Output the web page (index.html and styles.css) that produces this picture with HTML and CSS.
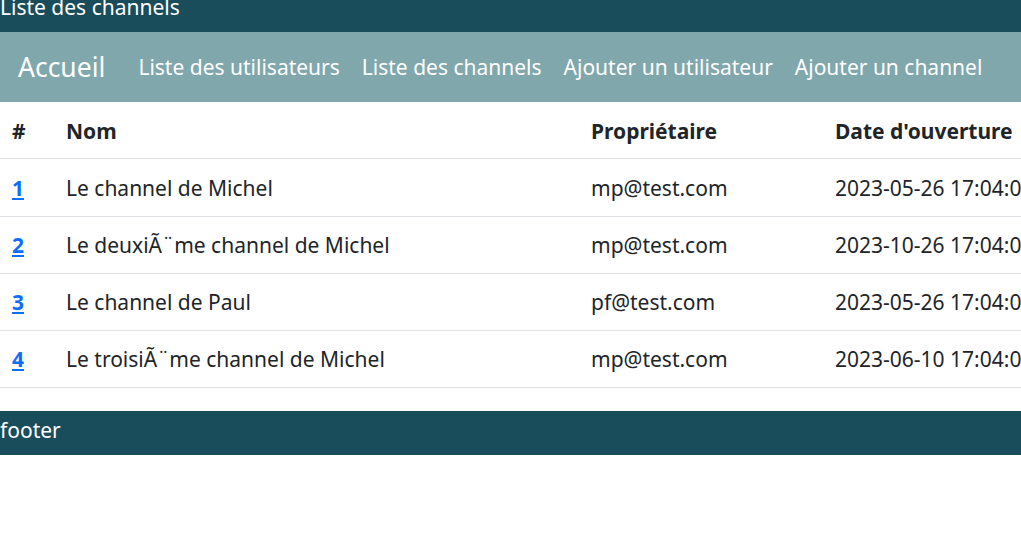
FILE: index.html
```html
<!DOCTYPE html>
<html lang="fr">
<head>
<meta charset="utf-8">
<title>Liste des channels</title>
<link rel="stylesheet" href="styles.css">
</head>
<body>
<header class="top">
  <h1 class="title">Liste des channels</h1>
</header>
<nav class="nav">
  <a class="brand" href="#">Accueil</a>
  <a class="link" href="#">Liste des utilisateurs</a>
  <a class="link" href="#">Liste des channels</a>
  <a class="link" href="#">Ajouter un utilisateur</a>
  <a class="link" href="#">Ajouter un channel</a>
</nav>
<main class="content">
  <table class="table">
    <thead>
      <tr><th class="c-id">#</th><th class="c-name">Nom</th><th class="c-owner">Propriétaire</th><th class="c-date">Date d'ouverture</th></tr>
    </thead>
    <tbody>
      <tr><td><a class="id" href="#">1</a></td><td>Le channel de Michel</td><td>mp@test.com</td><td>2023-05-26 17:04:05</td></tr>
      <tr><td><a class="id" href="#">2</a></td><td>Le deuxiÃ¨me channel de Michel</td><td>mp@test.com</td><td>2023-10-26 17:04:05</td></tr>
      <tr><td><a class="id" href="#">3</a></td><td>Le channel de Paul</td><td>pf@test.com</td><td>2023-05-26 17:04:05</td></tr>
      <tr><td><a class="id" href="#">4</a></td><td>Le troisiÃ¨me channel de Michel</td><td>mp@test.com</td><td>2023-06-10 17:04:05</td></tr>
    </tbody>
  </table>
</main>
<footer class="footer">footer</footer>
</body>
</html>
```
FILE: styles.css
```css
html, body {
  margin: 0;
  padding: 0;
  overflow: hidden;
}
body {
  font-family: "Noto Sans", "Open Sans", sans-serif;
  font-size: 21px;
  color: #212529;
  background: #fff;
}
.top {
  background: #1a4d5b;
  height: 32px;
  overflow: hidden;
}
.title {
  margin: 0;
  margin-top: -8px;
  font-size: 21px;
  font-weight: 400;
  line-height: 30px;
  color: #fff;
}
.nav {
  background: #7fa7ac;
  height: 70px;
  display: flex;
  align-items: center;
  padding-left: 18px;
  gap: 22px;
}
.nav a {
  color: #fff;
  text-decoration: none;
}
.brand {
  font-size: 26.5px;
  margin-right: 11px;
}
.link {
  font-size: 21px;
}
.content {
  overflow: hidden;
  width: 100%;
  padding-bottom: 23px;
}
.table {
  border-collapse: collapse;
  width: 1120px;
  table-layout: fixed;
}
.table th, .table td {
  text-align: left;
  padding: 13px 0 13px 12px;
  line-height: 30px;
  border-bottom: 1px solid #dee2e6;
  white-space: nowrap;
}
.table th {
  font-weight: 700;
  padding-top: 13px;
  padding-bottom: 12px;
  height: 31px;
}
.table tbody tr:first-child td {
  padding-top: 14px;
}
.c-id { width: 42px; }
.c-name { width: 513px; }
.c-owner { width: 232px; }
.id {
  color: #0d6efd;
  font-weight: 700;
  text-decoration: underline;
}
.footer {
  background: #1a4d5b;
  color: #fff;
  height: 44px;
  line-height: 38px;
  font-size: 21px;
}
```
